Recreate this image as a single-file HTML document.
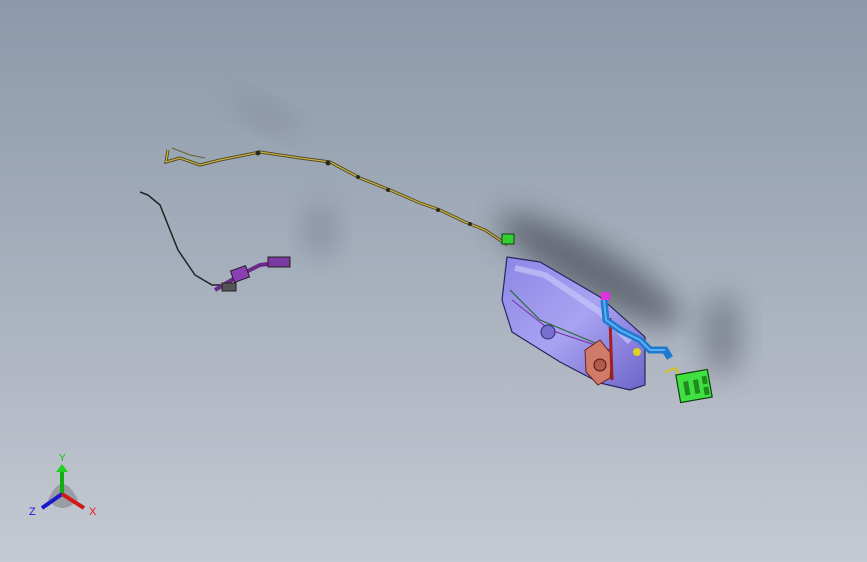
<!DOCTYPE html>
<html><head><style>
html,body{margin:0;padding:0;width:867px;height:562px;overflow:hidden}
body{background:linear-gradient(180deg,#8c99aa 0%,#a7b0bd 50%,#c5c9d2 100%)}
svg{position:absolute;left:0;top:0}
</style></head><body>
<svg width="867" height="562" viewBox="0 0 867 562">
<defs>
<filter id="b1" x="-50%" y="-50%" width="200%" height="200%"><feGaussianBlur stdDeviation="14"/></filter>
<linearGradient id="tk" x1="0" y1="0" x2="1" y2="1"><stop offset="0" stop-color="#8e86e6"/><stop offset="0.5" stop-color="#a9a3f2"/><stop offset="1" stop-color="#6d64c8"/></linearGradient>
</defs>
<ellipse cx="590" cy="270" rx="105" ry="26" transform="rotate(30 590 270)" fill="#3a3f4a" opacity="0.6" filter="url(#b1)"/>
<ellipse cx="722" cy="335" rx="20" ry="42" fill="#4a505c" opacity="0.45" filter="url(#b1)"/>
<ellipse cx="320" cy="230" rx="16" ry="28" fill="#5a6170" opacity="0.35" filter="url(#b1)"/>
<ellipse cx="265" cy="115" rx="38" ry="11" transform="rotate(25 265 115)" fill="#6a7180" opacity="0.3" filter="url(#b1)"/>
<path d="M168,150 L166,162 L180,158 L200,165 L220,160 L245,155 L260,152 L300,158 L330,162 L360,178 L390,190 L420,203 L440,210 L465,222 L485,230 L500,240 L508,245" fill="none" stroke="#4a4520" stroke-width="3"/>
<path d="M168,150 L166,162 L180,158 L200,165 L220,160 L245,155 L260,152 L300,158 L330,162 L360,178 L390,190 L420,203 L440,210 L465,222 L485,230 L500,240 L508,245" fill="none" stroke="#c8b040" stroke-width="1.3"/>
<path d="M172,148 L190,155 L205,158" fill="none" stroke="#6a6030" stroke-width="1"/>
<g fill="#2a2a20"><circle cx="258" cy="153" r="2.5"/><circle cx="328" cy="163" r="2.5"/><circle cx="358" cy="177" r="2"/><circle cx="388" cy="190" r="2"/><circle cx="438" cy="210" r="2"/><circle cx="470" cy="224" r="2"/></g>
<path d="M140,192 L148,195 L160,205 L168,225 L178,250 L195,275 L212,285 L230,285" fill="none" stroke="#222" stroke-width="1.5"/>
<path d="M215,290 L240,275 L260,265 L285,262" fill="none" stroke="#6a2a8a" stroke-width="4"/>
<rect x="268" y="257" width="22" height="10" fill="#7b3aa0" stroke="#222" stroke-width="1"/>
<rect x="232" y="268" width="16" height="12" fill="#8a40b0" stroke="#222" stroke-width="1" transform="rotate(-20 240 274)"/>
<rect x="222" y="283" width="14" height="8" fill="#555" stroke="#222"/>
<path d="M507,257 L540,262 L600,297 L645,337 L645,385 L630,390 L600,383 L560,362 L512,332 L502,300 Z" fill="url(#tk)" stroke="#2a2560" stroke-width="1.2"/>
<path d="M515,268 L545,275 L600,312 L630,342" fill="none" stroke="#c8c4fa" stroke-width="6" opacity="0.7"/>
<path d="M510,290 L540,320 L600,345" fill="none" stroke="#2a6a30" stroke-width="1.2"/>
<path d="M512,300 L550,330 L610,350" fill="none" stroke="#7a30a0" stroke-width="1"/>
<circle cx="548" cy="332" r="7" fill="#7870d0" stroke="#302a70"/>
<path d="M585,350 L600,340 L612,355 L610,378 L598,385 L586,372 Z" fill="#d07a6a" stroke="#6a2020"/>
<circle cx="600" cy="365" r="6" fill="#b05a4a" stroke="#501010"/>
<line x1="610" y1="318" x2="612" y2="380" stroke="#a02020" stroke-width="3"/>
<path d="M604,300 L606,320 L620,330 L640,340 L650,350 L665,350 L670,358" fill="none" stroke="#1e7ad0" stroke-width="7"/>
<path d="M604,300 L606,320 L620,330 L640,340 L650,350 L665,350" fill="none" stroke="#5ab0f0" stroke-width="2"/>
<rect x="601" y="292" width="9" height="8" fill="#e030e0"/>
<circle cx="637" cy="352" r="4" fill="#e0d020"/>
<rect x="502" y="234" width="12" height="10" fill="#30d030" stroke="#104010"/>
<path d="M665,372 L676,368 L680,380" fill="none" stroke="#d0c020" stroke-width="2"/>
<g transform="rotate(-10 694 386)"><rect x="678" y="372" width="32" height="28" fill="#40e040" stroke="#104010" stroke-width="1.2"/>
<rect x="684" y="380" width="5" height="14" fill="#208a20"/><rect x="694" y="380" width="5" height="14" fill="#208a20"/><rect x="703" y="378" width="5" height="8" fill="#208a20"/><rect x="703" y="389" width="5" height="8" fill="#208a20"/></g>
<path d="M48,500 Q62,468 78,500 Q62,516 48,500 Z" fill="#555" opacity="0.35"/>
<line x1="62" y1="494" x2="62" y2="470" stroke="#10b010" stroke-width="4"/>
<path d="M56,472 L62,464 L68,472 Z" fill="#20d020"/>
<line x1="62" y1="494" x2="42" y2="508" stroke="#1818d0" stroke-width="4"/>
<line x1="62" y1="494" x2="84" y2="508" stroke="#d01818" stroke-width="4"/>
<text x="59" y="461" font-family="Liberation Sans,sans-serif" font-size="10" fill="#10c010">Y</text>
<text x="29" y="515" font-family="Liberation Sans,sans-serif" font-size="11" fill="#1818e0">Z</text>
<text x="89" y="515" font-family="Liberation Sans,sans-serif" font-size="11" fill="#e01818">X</text>
</svg>
</body></html>
